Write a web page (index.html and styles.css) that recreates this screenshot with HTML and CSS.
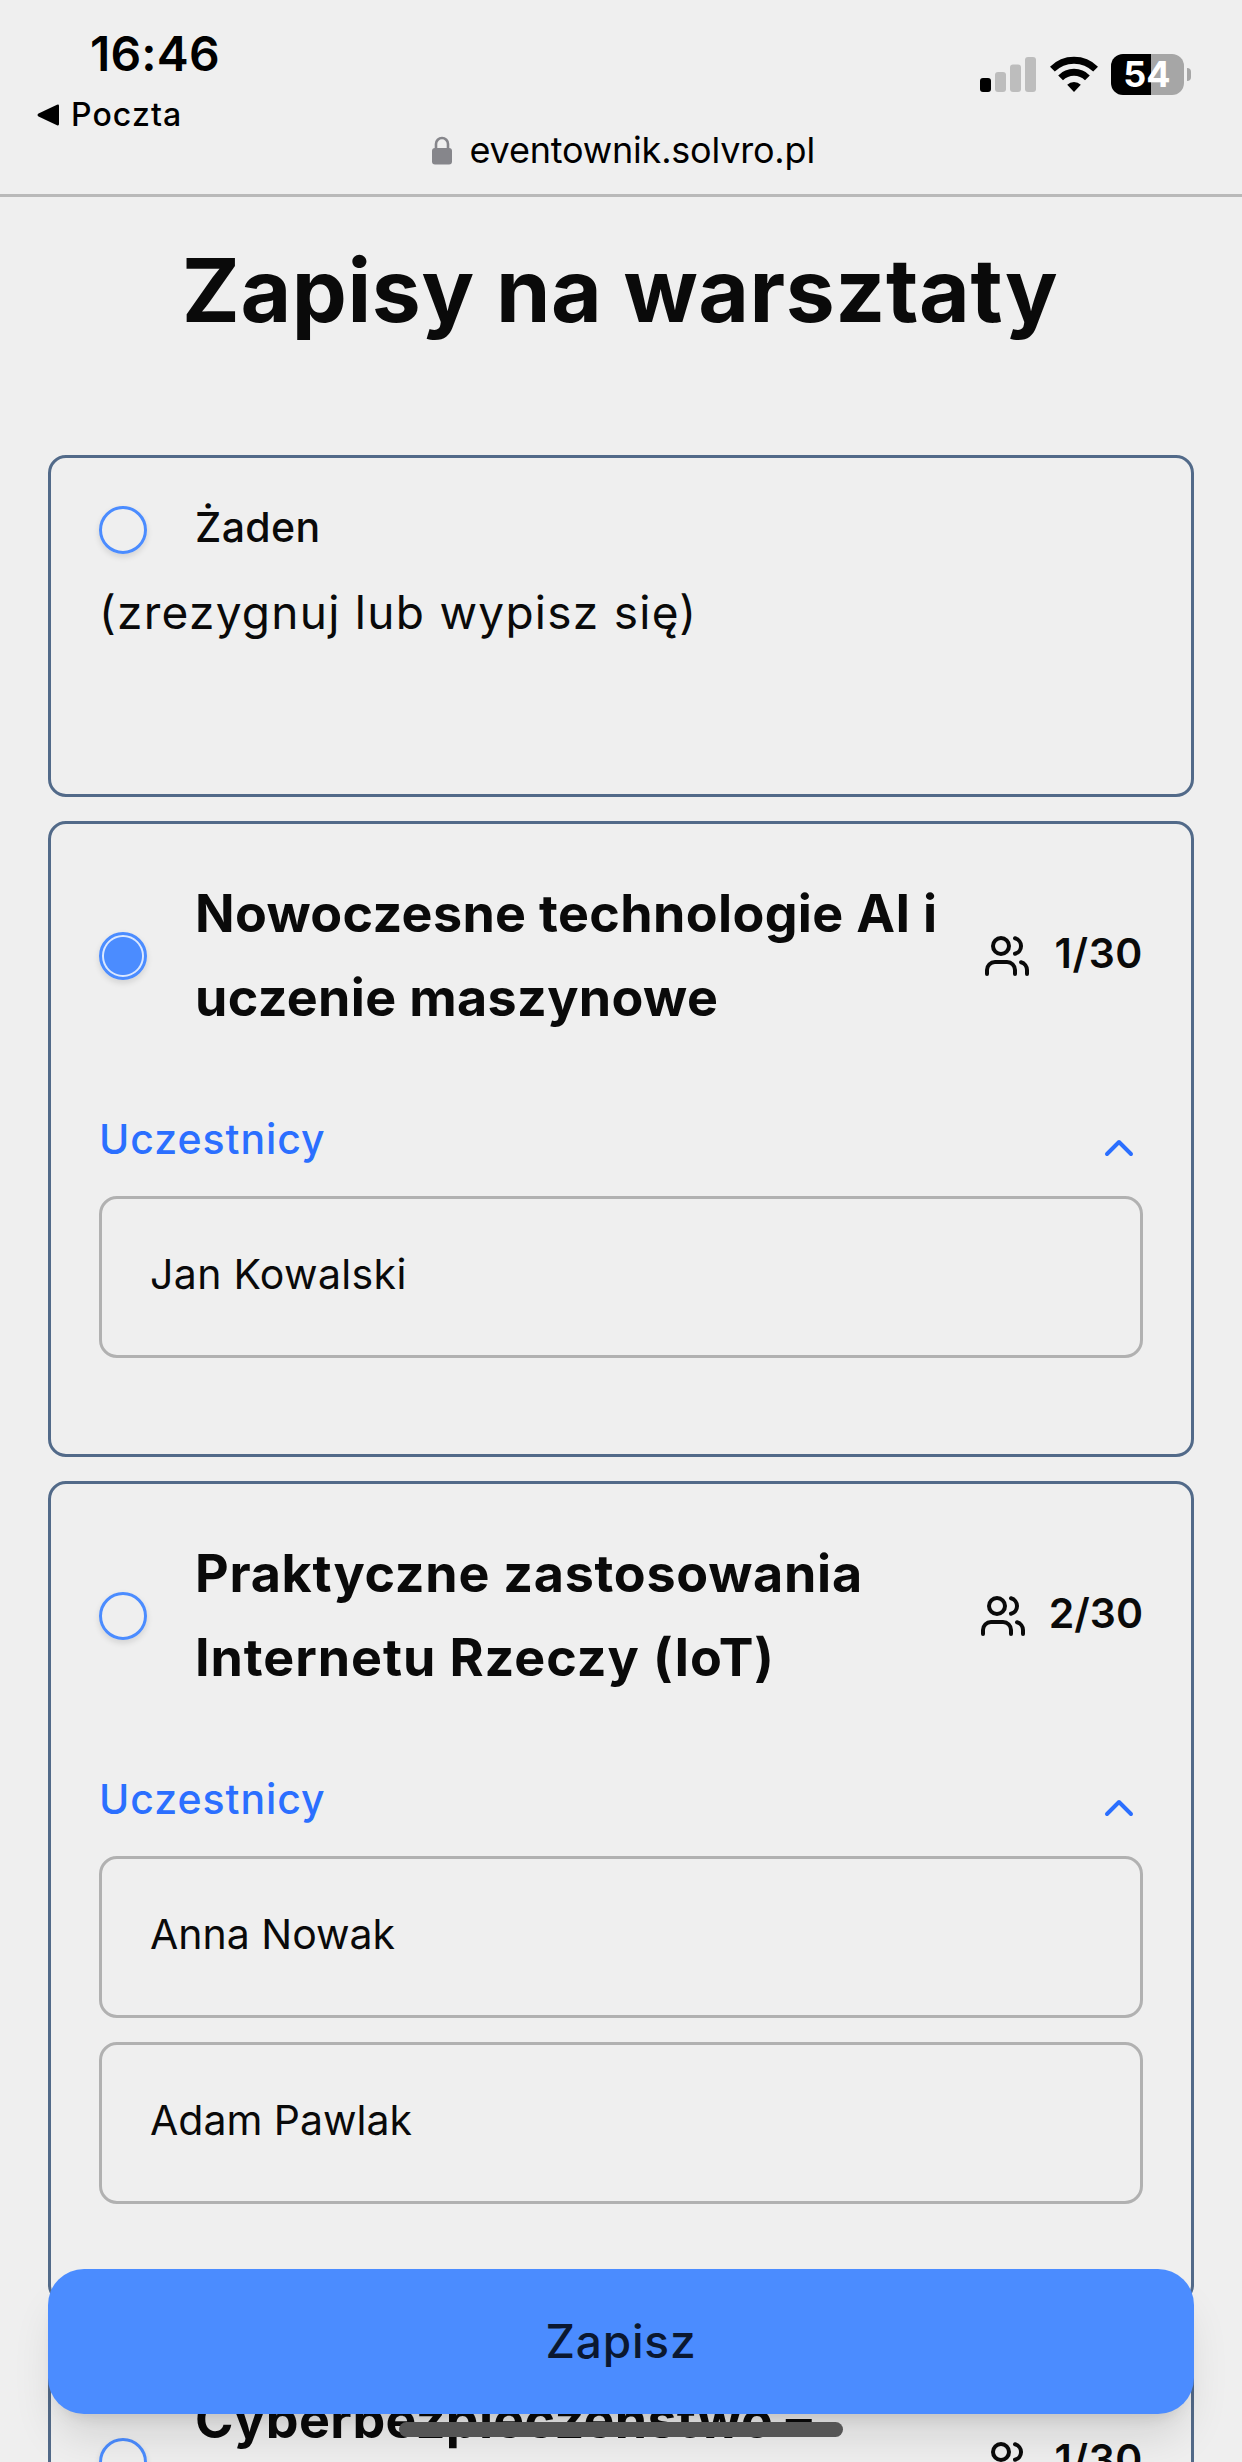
FILE: index.html
```html
<!DOCTYPE html>
<html lang="pl">
<head>
<meta charset="utf-8">
<title>Zapisy na warsztaty</title>
<link rel="stylesheet" href="styles.css">
</head>
<body>
<svg class="defs" aria-hidden="true">
  <symbol id="users" viewBox="0 0 24 24"><path d="M16 21v-2a4 4 0 0 0-4-4H6a4 4 0 0 0-4 4v2"/><circle cx="9" cy="7" r="4"/><path d="M22 21v-2a4 4 0 0 0-3-3.87"/><path d="M16 3.13a4 4 0 0 1 0 7.75"/></symbol>
  <symbol id="chevron" viewBox="0 0 24 24"><path d="m18 15-6-6-6 6"/></symbol>
</svg>
<div class="screen">
  <header class="topbar">
    <div class="left">
      <div class="time">16:46</div>
      <div class="back"><svg width="23" height="22" viewBox="0 0 23 22"><path d="M1.5 9.6 20 .8Q22 0 22 2v18q0 2-2 1.200L1.500 12.400Q-.5 11 1.500 9.600Z"/></svg><span>Poczta</span></div>
    </div>
    <div class="url">
      <svg width="20" height="29" viewBox="0 0 20 29"><path d="M4 13V8a6 6 0 0 1 12 0v5" fill="none" stroke="#86868b" stroke-width="2.600"/><rect y="12" width="20" height="16.500" rx="3" fill="#86868b"/></svg>
      <span>eventownik.solvro.pl</span>
    </div>
    <div class="status">
      <svg width="57" height="35" viewBox="0 0 57 35"><rect y="21" width="11" height="14" rx="3"/><g fill="#bdbdbd"><rect x="15" y="15" width="11" height="20" rx="3"/><rect x="30" y="7.500" width="11" height="27.500" rx="3"/><rect x="45" width="11" height="35" rx="3"/></g></svg>
      <svg class="wifi" width="48" height="36" viewBox="0 0 48 36"><g fill="none" stroke="#000" stroke-width="6.800"><path d="M2.400 13.200a30.500 30.500 0 0 1 43.200 0"/><path d="M10.600 21.800a19 19 0 0 1 26.800 0"/></g><path d="M24 36l-6.800-7.200a9.600 9.600 0 0 1 13.600 0Z"/></svg>
      <div class="battery">54</div>
      <div class="nub"></div>
    </div>
  </header>

  <main>
    <h1>Zapisy na warsztaty</h1>
    <section class="card none">
      <div class="row"><span class="radio"></span><span class="label">Żaden</span></div>
      <p>(zrezygnuj lub wypisz się)</p>
    </section>

    <section class="card ai">
      <div class="row"><span class="radio on"></span><h2>Nowoczesne technologie AI i<br>uczenie maszynowe</h2><div class="count"><svg><use href="#users"/></svg><span>1/30</span></div></div>
      <div class="toggle"><span>Uczestnicy</span><svg><use href="#chevron"/></svg></div>
      <ul><li class="jan">Jan Kowalski</li></ul>
    </section>

    <section class="card iot">
      <div class="row"><span class="radio"></span><h2>Praktyczne zastosowania<br>Internetu Rzeczy (IoT)</h2><div class="count"><svg><use href="#users"/></svg><span>2/30</span></div></div>
      <div class="toggle"><span>Uczestnicy</span><svg><use href="#chevron"/></svg></div>
      <ul><li>Anna Nowak</li><li>Adam Pawlak</li></ul>
    </section>

    <section class="card cyber">
      <div class="row"><span class="radio"></span><h2>Cyberbezpieczeństwo –<br>&nbsp;</h2><div class="count"><svg><use href="#users"/></svg><span>1/30</span></div></div>
    </section>
  </main>
  <button class="save">Zapisz</button>
  <div class="home"></div>
</div>
</body>
</html>
```
FILE: styles.css
```css
* { box-sizing: border-box; margin: 0; padding: 0; }
body { background: #efefef; color: #0a0a0a; font-family: Inter, "Liberation Sans", sans-serif; }
.defs { display: none; }
.screen { position: relative; width: 1242px; height: 2462px; overflow: hidden; }

.topbar { display: grid; grid-template-columns: 1fr 345px 1fr; height: 197px; border-bottom: 3px solid #b9b9b9; color: #000; }
.left { padding: 25px 0 0 37px; }
.time { padding-left: 53px; font-size: 48px; font-weight: 600; line-height: 58px; letter-spacing: .18px; }
.back { display: flex; align-items: center; gap: 11px; padding-top: 11px; font-size: 32px; font-weight: 500; line-height: 41px; letter-spacing: 1.1px; }
.url { display: flex; align-items: flex-start; gap: 18px; width: 400px; margin-left: -17px; padding-top: 136px; font-size: 36px; white-space: nowrap; letter-spacing: -.2px; }
.url span { line-height: 28px; }
.status { display: flex; align-items: flex-start; padding: 54px 0 0 186px; }
.status svg { flex: none; margin-top: 3px; }
.status .wifi { margin: 2px 0 0 13px; }
.battery { width: 73px; height: 41px; margin-left: 13px; border-radius: 12px; background: linear-gradient(90deg, #000 40px, #a6a6a6 40px); color: #fff; font-size: 36px; font-weight: 700; line-height: 41px; text-align: center; }
.nub { width: 4px; height: 13px; margin: 14px 0 0 3px; border-radius: 0 4px 4px 0; background: #a6a6a6; }

main { display: flex; flex-direction: column; gap: 24px; padding: 0 48px; }
h1 { height: 233.500px; padding-top: 43px; font-size: 87.500px; font-weight: 700; line-height: 100px; letter-spacing: .55px; text-align: center; text-indent: -2px; white-space: nowrap; }
.card { flex: none; padding: 48px 48px 96px; border: 3px solid #526a89; border-radius: 18px; }
.none { height: 342px; }
.row { display: flex; align-items: center; }
.radio { flex: none; width: 48px; height: 48px; margin-right: 48px; border: 3px solid #4b8cff; border-radius: 50%; box-shadow: 0 3px 6px rgba(0, 0, 0, .12); }
.radio.on { background: radial-gradient(circle, #4b8cff 18.500px, #dbe8ff 19.500px); }
.label { padding-bottom: 6px; font-size: 41px; font-weight: 500; line-height: 42px; letter-spacing: .4px; }
.none p { margin-top: 22px; font-size: 46px; line-height: 72px; letter-spacing: 1.27px; white-space: nowrap; }
h2 { flex: 1; font-size: 52px; font-weight: 700; line-height: 84px; letter-spacing: .35px; white-space: nowrap; }
.iot h2 { letter-spacing: .94px; }
.iot h2::first-line { letter-spacing: .74px; }
.cyber h2 { letter-spacing: .3px; }
.count { display: flex; align-items: center; gap: 24px; font-size: 41px; font-weight: 600; letter-spacing: .6px; }
.iot .count { letter-spacing: 0; gap: 22px; }
.count span { padding-bottom: 6px; }
.card svg { flex: none; width: 48px; height: 48px; fill: none; stroke: currentColor; stroke-width: 2; stroke-linecap: round; stroke-linejoin: round; }
.toggle { display: flex; justify-content: space-between; height: 84px; margin-top: 72px; color: #2b6fff; font-size: 41px; font-weight: 500; line-height: 55px; letter-spacing: .95px; }
.toggle svg { margin-top: 12px; }
ul { display: flex; flex-direction: column; gap: 24px; list-style: none; }
li { height: 162px; padding: 45px 48px 0; border: 3px solid #b1b1b1; border-radius: 18px; font-size: 41px; line-height: 60px; }
.jan { letter-spacing: .35px; }

.save { position: absolute; left: 48px; top: 2269px; width: 1146px; height: 145px; border: 0; border-radius: 36px; background: #4b8cff; box-shadow: 0 30px 45px -9px rgba(0, 0, 0, .12), 0 12px 18px -12px rgba(0, 0, 0, .14); color: #0b1830; font: 500 46px/143px Inter, sans-serif; letter-spacing: .8px; }
.home { position: absolute; left: 399px; top: 2422px; width: 444px; height: 15px; border-radius: 8px; background: #555; }
```
